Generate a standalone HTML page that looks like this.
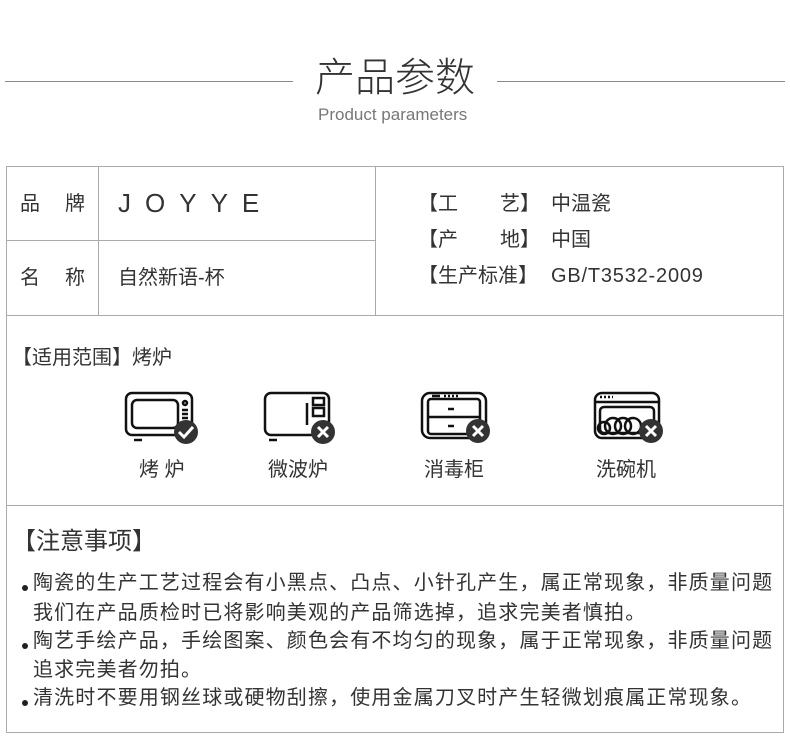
<!DOCTYPE html>
<html><head><meta charset="utf-8"><style>
*{margin:0;padding:0;box-sizing:border-box}
body{width:790px;height:746px;background:#fff;position:relative;overflow:hidden;font-family:"Liberation Sans","Noto Sans CJK SC",sans-serif;color:#333}
.a{position:absolute;white-space:nowrap}
.hl{position:absolute;background:#aaa;height:1px}
.vl{position:absolute;background:#aaa;width:1px}
.t20{font-size:20px;line-height:24px}
.n{letter-spacing:1.15px}
.dot{position:absolute;width:6px;height:6px;border-radius:50%;background:#222}
</style></head><body>
<div class="hl" style="left:5px;top:81px;width:288px;background:#888"></div>
<div class="hl" style="left:497px;top:81px;width:288px;background:#888"></div>
<div class="a" style="left:315px;top:54px;font-size:40px;line-height:48px;color:#333;font-weight:300">产品参数</div>
<div class="a" style="left:318px;top:105px;font-size:17px;line-height:20px;color:#777">Product parameters</div>

<div class="a" style="left:6px;top:166px;width:778px;height:567px;border:1px solid #aaa"></div>
<div class="vl" style="left:98px;top:166px;height:149px"></div>
<div class="vl" style="left:375px;top:166px;height:149px"></div>
<div class="hl" style="left:6px;top:240px;width:369px"></div>
<div class="hl" style="left:6px;top:315px;width:778px"></div>
<div class="hl" style="left:6px;top:505px;width:778px"></div>

<div class="a t20" style="left:20px;top:192px">品</div>
<div class="a t20" style="left:65px;top:192px">牌</div>
<div class="a t20" style="left:20px;top:266px">名</div>
<div class="a t20" style="left:65px;top:266px">称</div>
<div class="a" style="left:118px;top:188px;font-size:26px;line-height:30px;letter-spacing:14px;color:#333">JOYYE</div>
<div class="a t20" style="left:118px;top:266px">自然新语-杯</div>

<div class="a t20" style="left:418px;top:192px">【工</div>
<div class="a t20" style="left:500px;top:192px">艺】</div>
<div class="a t20" style="left:551px;top:192px">中温瓷</div>
<div class="a t20" style="left:418px;top:228px">【产</div>
<div class="a t20" style="left:500px;top:228px">地】</div>
<div class="a t20" style="left:551px;top:228px">中国</div>
<div class="a t20" style="left:418px;top:264px">【生产标准】</div>
<div class="a t20" style="left:551px;top:264px;letter-spacing:0.8px">GB/T3532-2009</div>

<div class="a t20" style="left:12px;top:346px">【适用范围】烤炉</div>

<svg class="a" style="left:120px;top:390px" width="85" height="55" viewBox="0 0 85 55" fill="none" stroke="#111" stroke-width="2.5">
<rect x="6" y="3" width="66" height="42" rx="6"/><rect x="12" y="10" width="46" height="28" rx="5"/>
<circle cx="65" cy="13" r="2"/><line x1="62" y1="20" x2="68" y2="20"/><line x1="62" y1="24" x2="68" y2="24"/><line x1="62" y1="28" x2="68" y2="28"/>
<line x1="14" y1="50" x2="22" y2="50"/>
<circle cx="66" cy="42" r="12" fill="#333" stroke="none"/><path d="M59 42l5 5 9-10" stroke="#fff" stroke-width="3"/></svg>
<div class="a t20" style="left:139px;top:458px">烤 炉</div>

<svg class="a" style="left:255px;top:390px" width="85" height="55" viewBox="0 0 85 55" fill="none" stroke="#111" stroke-width="2.5">
<rect x="10" y="3" width="64" height="42" rx="6"/><line x1="52" y1="13" x2="52" y2="35"/>
<rect x="58" y="8" width="11" height="7"/><rect x="58" y="18" width="11" height="8"/>
<line x1="14" y1="50" x2="22" y2="50"/>
<circle cx="68" cy="42" r="12" fill="#333" stroke="none"/><path d="M63 37l10 10M73 37l-10 10" stroke="#fff" stroke-width="3"/></svg>
<div class="a t20" style="left:268px;top:458px">微波炉</div>

<svg class="a" style="left:410px;top:390px" width="85" height="55" viewBox="0 0 85 55" fill="none" stroke="#111" stroke-width="2.5">
<rect x="12" y="3" width="64" height="45" rx="8"/><rect x="18" y="9" width="52" height="35" rx="3"/>
<line x1="18" y1="27" x2="70" y2="27"/><line x1="22" y1="6" x2="30" y2="6"/><line x1="34" y1="6" x2="48" y2="6" stroke-dasharray="2 2"/>
<line x1="38" y1="19" x2="44" y2="19"/><line x1="38" y1="36" x2="44" y2="36"/>
<circle cx="68" cy="41" r="12" fill="#333" stroke="none"/><path d="M63 36l10 10M73 36l-10 10" stroke="#fff" stroke-width="3"/></svg>
<div class="a t20" style="left:424px;top:458px">消毒柜</div>

<svg class="a" style="left:585px;top:390px" width="85" height="55" viewBox="0 0 85 55" fill="none" stroke="#111" stroke-width="2.5">
<rect x="10" y="3" width="64" height="45" rx="7"/><line x1="10" y1="12" x2="74" y2="12"/><line x1="15" y1="7" x2="28" y2="7" stroke-dasharray="2 2"/>
<rect x="15" y="17" width="54" height="26" rx="4"/>
<circle cx="19" cy="38" r="6"/><circle cx="28" cy="36" r="8"/><circle cx="38" cy="36" r="8"/><circle cx="48" cy="36" r="8"/>
<circle cx="66" cy="41" r="12" fill="#333" stroke="none"/><path d="M61 36l10 10M71 36l-10 10" stroke="#fff" stroke-width="3"/></svg>
<div class="a t20" style="left:596px;top:458px">洗碗机</div>

<div class="a" style="left:12px;top:527px;font-size:24px;line-height:30px">【注意事项】</div>
<div class="dot" style="left:22px;top:585px"></div>
<div class="a t20 n" style="left:33px;top:571px">陶瓷的生产工艺过程会有小黑点、凸点、小针孔产生，属正常现象，非质量问题</div>
<div class="a t20 n" style="left:33px;top:601px">我们在产品质检时已将影响美观的产品筛选掉，追求完美者慎拍。</div>
<div class="dot" style="left:22px;top:643px"></div>
<div class="a t20 n" style="left:33px;top:629px">陶艺手绘产品，手绘图案、颜色会有不均匀的现象，属于正常现象，非质量问题</div>
<div class="a t20 n" style="left:33px;top:658px">追求完美者勿拍。</div>
<div class="dot" style="left:22px;top:700px"></div>
<div class="a t20 n" style="left:33px;top:686px">清洗时不要用钢丝球或硬物刮擦，使用金属刀叉时产生轻微划痕属正常现象。</div>
</body></html>
